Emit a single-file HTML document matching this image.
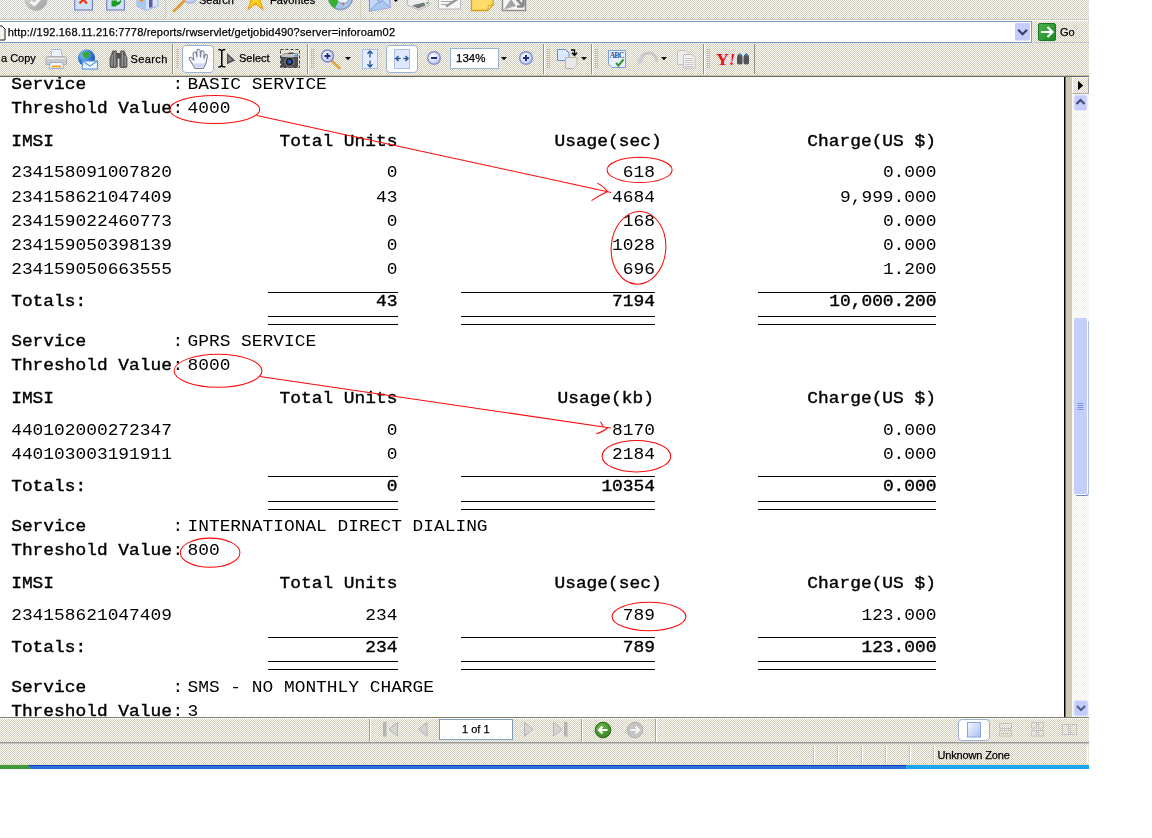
<!DOCTYPE html>
<html>
<head>
<meta charset="utf-8">
<title>Report</title>
<style>
html,body{margin:0;padding:0;background:#fff;}
body{width:1152px;height:838px;position:relative;overflow:hidden;font-family:"Liberation Sans",sans-serif;font-size:11px;color:#000;}
#win{position:absolute;left:0;top:0;width:1089px;height:769px;overflow:hidden;background:#fff;}
.abs{position:absolute;}
.dith1{background:repeating-conic-gradient(rgba(0,0,0,0) 0 25%,#cccccc 0 50%) 0 0/2px 2px,linear-gradient(90deg,#fdfff8 0,#fffdf0 25%,#fffbe6 50%,#fffbe6 100%);}
.dith2{background:repeating-conic-gradient(#fffbe4 0 25%,#cccccc 0 50%) 0 0/2px 2px;}
/* top IE toolbar */
#tb1{left:0;top:0;width:1090px;height:19px;}
#tb1line{left:0;top:19px;width:1090px;height:1px;background:#ccccb0;}
#tb1w{left:0;top:20px;width:1090px;height:1px;background:#fff;}
/* address bar */
#addr{left:0;top:21px;width:1090px;height:22px;}
#addrf{left:-1px;top:21px;width:1031px;height:20px;background:#fff;border:1px solid #7f9db9;}
#url{left:7.7px;top:25px;font-size:11px;line-height:14px;white-space:nowrap;letter-spacing:0.195px;}
/* acrobat toolbar */
#tb2{left:0;top:43px;width:1090px;height:32px;}
#tb2a{left:0;top:75px;width:1090px;height:1px;background:#cdc2aa;}
#tb2b{left:0;top:76px;width:1090px;height:1px;background:#686868;}
#txt{position:absolute;left:0;top:0;width:1064px;height:640px;filter:grayscale(1);}
#url{filter:grayscale(1);-webkit-text-stroke:0.25px #000;}
.lbl{filter:grayscale(1);-webkit-text-stroke:0.25px #000;position:absolute;font-size:11px;line-height:14px;white-space:nowrap;}
/* document */
#doc{left:0;top:77px;width:1064px;height:640px;background:#fff;overflow:hidden;}
.t{position:absolute;font-family:"Liberation Mono",monospace;font-size:17.87px;line-height:20px;height:20px;white-space:pre;transform-origin:0 0;transform:scaleY(0.875);color:#000;}
.b{-webkit-text-stroke:0.42px #000;}
.r{text-align:right;}
.ln{position:absolute;height:1px;background:#000;}
/* bottom */
#nav{left:0;top:717px;width:1090px;height:26px;}
#st{left:0;top:744px;width:1090px;height:21px;}
</style>
</head>
<body>
<div id="win">
<div id="tb1" class="abs dith1"></div>
<div id="tb1line" class="abs"></div>
<div id="tb1w" class="abs"></div>
<div id="addr" class="abs dith2"></div>
<div id="addrf" class="abs"></div>
<div id="url" class="abs">http://192.168.11.216:7778/reports/rwservlet/getjobid490?server=inforoam02</div>
<div id="tb2" class="abs dith2"></div>
<div id="tb2a" class="abs"></div>
<div id="tb2b" class="abs"></div>
<div id="doc" class="abs">
<div id="txt">
<div class="t b" style="left:11.20px;top:-0.71px">Service</div>
<div class="t" style="left:172.40px;top:-0.71px">:</div>
<div class="t" style="left:187.50px;top:-0.71px">BASIC SERVICE</div>
<div class="t b" style="left:11.20px;top:23.29px">Threshold Value</div>
<div class="t" style="left:172.40px;top:23.29px">:</div>
<div class="t" style="left:187.50px;top:23.29px">4000</div>
<div class="t b" style="left:11.20px;top:56.09px">IMSI</div>
<div class="t b" style="left:279.56px;top:56.09px">Total Units</div>
<div class="t b" style="left:554.48px;top:56.09px">Usage(sec)</div>
<div class="t b" style="left:807.34px;top:56.09px">Charge(US $)</div>
<div class="t" style="left:11.20px;top:87.49px">234158091007820</div>
<div class="t" style="left:386.78px;top:87.49px">0</div>
<div class="t" style="left:622.83px;top:87.49px">618</div>
<div class="t" style="left:882.89px;top:87.49px">0.000</div>
<div class="t" style="left:11.20px;top:111.69px">234158621047409</div>
<div class="t" style="left:376.06px;top:111.69px">43</div>
<div class="t" style="left:612.11px;top:111.69px">4684</div>
<div class="t" style="left:840.00px;top:111.69px">9,999.000</div>
<div class="t" style="left:11.20px;top:135.99px">234159022460773</div>
<div class="t" style="left:386.78px;top:135.99px">0</div>
<div class="t" style="left:622.83px;top:135.99px">168</div>
<div class="t" style="left:882.89px;top:135.99px">0.000</div>
<div class="t" style="left:11.20px;top:160.19px">234159050398139</div>
<div class="t" style="left:386.78px;top:160.19px">0</div>
<div class="t" style="left:612.11px;top:160.19px">1028</div>
<div class="t" style="left:882.89px;top:160.19px">0.000</div>
<div class="t" style="left:11.20px;top:184.39px">234159050663555</div>
<div class="t" style="left:386.78px;top:184.39px">0</div>
<div class="t" style="left:622.83px;top:184.39px">696</div>
<div class="t" style="left:882.89px;top:184.39px">1.200</div>
<div class="t b" style="left:11.20px;top:215.89px">Totals:</div>
<div class="t b" style="left:376.06px;top:215.89px">43</div>
<div class="t b" style="left:612.11px;top:215.89px">7194</div>
<div class="t b" style="left:829.28px;top:215.89px">10,000.200</div>
<div class="ln" style="left:268px;top:215px;width:130px"></div>
<div class="ln" style="left:268px;top:239px;width:130px"></div>
<div class="ln" style="left:268px;top:247px;width:130px"></div>
<div class="ln" style="left:461px;top:215px;width:194px"></div>
<div class="ln" style="left:461px;top:239px;width:194px"></div>
<div class="ln" style="left:461px;top:247px;width:194px"></div>
<div class="ln" style="left:758px;top:215px;width:178px"></div>
<div class="ln" style="left:758px;top:239px;width:178px"></div>
<div class="ln" style="left:758px;top:247px;width:178px"></div>
<div class="t b" style="left:11.20px;top:255.89px">Service</div>
<div class="t" style="left:172.40px;top:255.89px">:</div>
<div class="t" style="left:187.50px;top:255.89px">GPRS SERVICE</div>
<div class="t b" style="left:11.20px;top:279.69px">Threshold Value</div>
<div class="t" style="left:172.40px;top:279.69px">:</div>
<div class="t" style="left:187.50px;top:279.69px">8000</div>
<div class="t b" style="left:11.20px;top:312.69px">IMSI</div>
<div class="t b" style="left:279.56px;top:312.69px">Total Units</div>
<div class="t b" style="left:557.50px;top:312.69px">Usage(kb)</div>
<div class="t b" style="left:807.34px;top:312.69px">Charge(US $)</div>
<div class="t" style="left:11.20px;top:344.89px">440102000272347</div>
<div class="t" style="left:386.78px;top:344.89px">0</div>
<div class="t" style="left:612.11px;top:344.89px">8170</div>
<div class="t" style="left:882.89px;top:344.89px">0.000</div>
<div class="t" style="left:11.20px;top:369.09px">440103003191911</div>
<div class="t" style="left:386.78px;top:369.09px">0</div>
<div class="t" style="left:612.11px;top:369.09px">2184</div>
<div class="t" style="left:882.89px;top:369.09px">0.000</div>
<div class="t b" style="left:11.20px;top:400.89px">Totals:</div>
<div class="t b" style="left:386.78px;top:400.89px">0</div>
<div class="t b" style="left:601.39px;top:400.89px">10354</div>
<div class="t b" style="left:882.89px;top:400.89px">0.000</div>
<div class="ln" style="left:268px;top:399px;width:130px"></div>
<div class="ln" style="left:268px;top:424px;width:130px"></div>
<div class="ln" style="left:268px;top:432px;width:130px"></div>
<div class="ln" style="left:461px;top:399px;width:194px"></div>
<div class="ln" style="left:461px;top:424px;width:194px"></div>
<div class="ln" style="left:461px;top:432px;width:194px"></div>
<div class="ln" style="left:758px;top:399px;width:178px"></div>
<div class="ln" style="left:758px;top:424px;width:178px"></div>
<div class="ln" style="left:758px;top:432px;width:178px"></div>
<div class="t b" style="left:11.20px;top:440.79px">Service</div>
<div class="t" style="left:172.40px;top:440.79px">:</div>
<div class="t" style="left:187.50px;top:440.79px">INTERNATIONAL DIRECT DIALING</div>
<div class="t b" style="left:11.20px;top:464.69px">Threshold Value</div>
<div class="t" style="left:172.40px;top:464.69px">:</div>
<div class="t" style="left:187.50px;top:464.69px">800</div>
<div class="t b" style="left:11.20px;top:497.79px">IMSI</div>
<div class="t b" style="left:279.56px;top:497.79px">Total Units</div>
<div class="t b" style="left:554.48px;top:497.79px">Usage(sec)</div>
<div class="t b" style="left:807.34px;top:497.79px">Charge(US $)</div>
<div class="t" style="left:11.20px;top:529.99px">234158621047409</div>
<div class="t" style="left:365.33px;top:529.99px">234</div>
<div class="t" style="left:622.83px;top:529.99px">789</div>
<div class="t" style="left:861.45px;top:529.99px">123.000</div>
<div class="t b" style="left:11.20px;top:561.89px">Totals:</div>
<div class="t b" style="left:365.33px;top:561.89px">234</div>
<div class="t b" style="left:622.83px;top:561.89px">789</div>
<div class="t b" style="left:861.45px;top:561.89px">123.000</div>
<div class="ln" style="left:268px;top:560px;width:130px"></div>
<div class="ln" style="left:268px;top:584px;width:130px"></div>
<div class="ln" style="left:268px;top:592px;width:130px"></div>
<div class="ln" style="left:461px;top:560px;width:194px"></div>
<div class="ln" style="left:461px;top:584px;width:194px"></div>
<div class="ln" style="left:461px;top:592px;width:194px"></div>
<div class="ln" style="left:758px;top:560px;width:178px"></div>
<div class="ln" style="left:758px;top:584px;width:178px"></div>
<div class="ln" style="left:758px;top:592px;width:178px"></div>
<div class="t b" style="left:11.20px;top:601.59px">Service</div>
<div class="t" style="left:172.40px;top:601.59px">:</div>
<div class="t" style="left:187.50px;top:601.59px">SMS - NO MONTHLY CHARGE</div>
<div class="t b" style="left:11.20px;top:625.69px">Threshold Value</div>
<div class="t" style="left:172.40px;top:625.69px">:</div>
<div class="t" style="left:187.50px;top:625.69px">3</div>
</div>
<svg class="abs" style="left:0;top:-77px;" width="1064" height="769" viewBox="0 0 1064 769">
<g fill="none" stroke="#ff0808" stroke-width="1.050">
<ellipse cx="214.7" cy="109.5" rx="45" ry="14"/>
<ellipse cx="639.6" cy="169.9" rx="32.5" ry="12.7"/>
<ellipse cx="638.5" cy="247.8" rx="27.3" ry="36.4" transform="rotate(4 638.5 247.8)"/>
<ellipse cx="218" cy="370.8" rx="43.9" ry="16.5"/>
<ellipse cx="636.4" cy="456.2" rx="34.3" ry="15.7"/>
<ellipse cx="210.1" cy="552.7" rx="29.8" ry="14.6"/>
<ellipse cx="649" cy="616.5" rx="36.9" ry="14.3"/>
<path d="M256.7 115.4 L611.2 192.4"/>
<path d="M597.3 183.1 Q604 186.5 607.5 191.6 Q599 195.5 591.5 200.6"/>
<path d="M259.8 376.5 L610.6 427.9"/>
<path d="M600.4 421.7 L603.4 426.8"/>
<path d="M608 427.8 Q601.5 432.5 596.3 433.8"/>
</g>
</svg>

</div>
<div id="nav" class="abs dith2"></div>
<div id="st" class="abs dith2"></div>
<div class="abs" id="band" style="left:1066px;top:77px;width:6px;height:640px;background:repeating-conic-gradient(#d0cca0 0 25%,#cccccc 0 50%) 0 0/2px 2px;"></div>
<div class="abs" id="pedge" style="left:1064px;top:77px;width:1px;height:640px;background:#000;"></div><div class="abs" style="left:1065px;top:77px;width:1px;height:640px;background:#6e6e6e;"></div>
<div class="abs" id="sbtrack" style="left:1072px;top:77px;width:17px;height:640px;background:repeating-conic-gradient(#ffffff 0 25%,#f1f1ea 0 50%) 0 0/2px 2px;"></div>
<div class="abs" id="sbarrow" style="left:1072px;top:77px;width:16px;height:16px;border-left:1px solid #fff;border-top:1px solid #fff;border-right:1px solid #a8a8a0;border-bottom:1px solid #b4aca4;box-sizing:border-box;width:17px;height:17px;background:repeating-conic-gradient(#fffbe4 0 25%,#d4d4d4 0 50%) 0 0/2px 2px;"></div>
<div class="abs" id="sbthumb" style="left:1074px;top:318px;width:13px;height:176px;border-radius:2px;box-shadow:1px 1px 0 0 #fff, 1.500px 2px 0 0 #6c84d0;background:repeating-conic-gradient(#cfd4ff 0 25%,#bcc8f8 0 50%) 0 0/2px 2px;"></div>
<div class="lbl" style="left:1px;top:51px;">a Copy</div>
<div class="lbl" style="left:130.5px;top:52px;letter-spacing:0.4px;">Search</div>
<div class="lbl" style="left:239px;top:51px;">Select</div>
<div class="lbl" style="left:199px;top:-7.5px;">Search</div>
<div class="lbl" style="left:270px;top:-7.5px;">Favorites</div>
<div class="lbl" style="left:1060px;top:25px;">Go</div>
<div class="abs" style="left:450px;top:48px;width:47px;height:19px;border:1px solid #9db4cf;background:#fff;"></div>
<div class="lbl" style="left:456px;top:51px;font-size:11.5px;">134%</div>
<div class="abs" style="left:439px;top:719px;width:72px;height:19px;border:1px solid #7f9db9;background:#fff;"></div>
<div class="lbl" style="left:462px;top:722px;">1 of 1</div>
<div class="lbl" style="left:937.5px;top:748px;letter-spacing:-0.15px;">Unknown Zone</div>
<svg class="abs" id="ico" style="left:0;top:0;" width="1090" height="769" viewBox="0 0 1090 769">
<defs>
<linearGradient id="gGray" x1="0" y1="0" x2="1" y2="1"><stop offset="0" stop-color="#e4e4e4"/><stop offset="1" stop-color="#9a9a9a"/></linearGradient>
<linearGradient id="gBlue" x1="0" y1="0" x2="0" y2="1"><stop offset="0" stop-color="#e8f0ff"/><stop offset="1" stop-color="#a9c0ee"/></linearGradient>
<linearGradient id="gPage" x1="0" y1="0" x2="1" y2="1"><stop offset="0" stop-color="#f4f8ff"/><stop offset="1" stop-color="#a8bdf0"/></linearGradient>
<radialGradient id="gGlobe" cx="0.35" cy="0.3" r="0.8"><stop offset="0" stop-color="#8fd0ff"/><stop offset="0.6" stop-color="#2a6fd0"/><stop offset="1" stop-color="#1a3f9a"/></radialGradient>
<radialGradient id="gLens" cx="0.4" cy="0.35" r="0.7"><stop offset="0" stop-color="#ffffff"/><stop offset="1" stop-color="#b8c4f4"/></radialGradient>
<linearGradient id="gGo" x1="0" y1="0" x2="1" y2="1"><stop offset="0" stop-color="#4cb050"/><stop offset="1" stop-color="#1a8a22"/></linearGradient>
<radialGradient id="gGreen" cx="0.4" cy="0.35" r="0.7"><stop offset="0" stop-color="#6fc04a"/><stop offset="1" stop-color="#2e7d1e"/></radialGradient>
</defs>
<!-- ===== top IE toolbar (clipped at top) ===== -->
<g id="ie-tb">
<circle cx="36.200" cy="-0.500" r="11" fill="url(#gGray)" stroke="#b8b8b8" stroke-width="1"/>
<path d="M30.500 1.500 L34.500 4.500 L40.500 -2" fill="none" stroke="#f4f4f4" stroke-width="3"/>
<rect x="74.800" y="-8" width="17.600" height="18" fill="#cfe0fb" stroke="#6a74b8" stroke-width="1"/>
<path d="M79.500 3.500 L83.200 -0.300 L87 3.500" fill="none" stroke="#f43a10" stroke-width="2.400"/>
<rect x="106.800" y="-8" width="17.600" height="18" fill="#cfe0fb" stroke="#6a74b8" stroke-width="1"/>
<path d="M111.500 0.500 L117 0.500 L117 2 C119 2 120.500 1 121.500 -1 C121.500 3 119 5.500 116 5.500 L116 6.500 L111.500 6.500 Z" fill="#1a9a22"/>
<path d="M137 -3 L137 6.500 L146 10.500 L158 6 L158 -3 Z" fill="#d4e4fa" stroke="#9ab8e4" stroke-width="1"/>
<path d="M137 6.500 L146 10.500 L146 0 L137 -2 Z" fill="#a8c8f0"/>
<rect x="149" y="0" width="3.500" height="7.500" fill="#5c5ca8"/>
<circle cx="141.500" cy="-0.500" r="2" fill="#f08a20"/>
<rect x="165" y="0" width="1" height="18" fill="#d8d4b0"/>
<circle cx="190" cy="-5" r="8" fill="url(#gLens)" stroke="#a8b8d8" stroke-width="1.500"/>
<path d="M174 11 L184 1" stroke="#e89a30" stroke-width="2.600" stroke-linecap="round"/>
<path d="M255.500 -13.500 L258.300 -4.800 L267.400 -4.900 L260 0.500 L262.900 9.200 L255.500 3.800 L248.100 9.200 L251 0.500 L243.600 -4.900 L252.700 -4.800 Z" fill="#ffd022" stroke="#e8a010" stroke-width="1.200"/>
<circle cx="340.500" cy="-2.500" r="12" fill="#a4c8ec" stroke="#8a98b8" stroke-width="1.500"/>
<path d="M340.500 -14.500 A12 12 0 0 0 335 8.200 L340.500 -2.500 Z" fill="#38b030"/>
<circle cx="343" cy="-3" r="6.500" fill="#e8f0f8" stroke="#8890b0" stroke-width="1"/>
<path d="M343 2.500 L343 5.500" stroke="#e04020" stroke-width="1"/>
<rect x="360" y="0" width="1" height="18" fill="#d8d4b0"/>
<path d="M369.500 -8 L369.500 11 L390 7.500 L390 -8 Z" fill="#c4d8f8" stroke="#8a98d8" stroke-width="1.200"/>
<path d="M369.500 11 L381 -1 L390 7.500" fill="#a8c8f0" stroke="#8a98d8" stroke-width="1"/><path d="M371 -6 L380 3 L389 -6" fill="none" stroke="#8a98d8" stroke-width="1"/>
<path d="M393.800 0 L397.800 0 L395.800 2 Z" fill="#000"/>
<path d="M408 -2 L428 -2 L429 5 L419 10 L407 5 Z" fill="#ececec" stroke="#b8b8b8" stroke-width="1"/>
<path d="M412 5.500 L424 2.500 L425.500 5.500 L418 8.500 Z" fill="#787878"/>
<circle cx="427" cy="3" r="1" fill="#30c030"/>
<rect x="438.500" y="-6" width="22" height="15" fill="#f6f6f6" stroke="#b8b8b8" stroke-width="1"/>
<path d="M441 1.500 L452 1.500 M441 4.500 L448 4.500" stroke="#a8a8a8" stroke-width="1"/>
<path d="M446 6.500 L459 -2" stroke="#9a9a9a" stroke-width="2.500"/>
<path d="M471.500 -8 L493 -8 L493 5 L487.500 10.500 L471.500 10.500 Z" fill="#ffdc6a" stroke="#d8a018" stroke-width="1.300"/>
<path d="M487.500 10.500 L488.500 5.500 L493 5 Z" fill="#fff0b0" stroke="#d8a018" stroke-width="1"/>
<rect x="502.500" y="-8" width="23" height="18.500" fill="#f4f4f4" stroke="#8c8c8c" stroke-width="1.400"/>
<path d="M504 9.500 L511 -1 L516 6 L504 9.500 Z" fill="#a4a4a4"/>
<path d="M510 -8 L523 6 M523.500 6.500 L523.500 0 M523.500 6.500 L517 6.500" stroke="#8a8a8a" stroke-width="2.600" fill="none"/>
</g>
<!-- ===== address bar ===== -->
<g id="addr-ic">
<rect x="1034" y="42" width="55" height="1" fill="#c8c8c2"/>
<path d="M-3 26 L2 26 L5 29 L5 40 L-3 40 Z" fill="#f4f4ee" stroke="#202020" stroke-width="1"/>
<rect x="1015" y="23" width="15" height="17.500" rx="1" fill="#c6ccfc"/>
<path d="M1018.200 29.800 L1022.600 34.200 L1027 29.800" fill="none" stroke="#3a3e70" stroke-width="2.200"/>
<rect x="1038.500" y="23.500" width="17" height="17" rx="1.500" fill="url(#gGo)" stroke="#1c7a24" stroke-width="1"/>
<path d="M1041 32 L1052 32 M1047.500 27 L1052.500 32 L1047.500 37" fill="none" stroke="#fff" stroke-width="2.2"/>
</g>
<!-- ===== acrobat toolbar ===== -->
<g id="acro">
<!-- printer -->
<path d="M51 57 L52 49.500 L61 49.500 L62.500 57 Z" fill="#eef2ff" stroke="#a8b8e0" stroke-width="1"/>
<path d="M48 56.500 L64.500 56.500 Q66.500 56.500 66.500 58.500 L66.500 64.500 L46 64.500 L46 58.500 Q46 56.500 48 56.500 Z" fill="#cacaca" stroke="#b0b0b0" stroke-width="1"/>
<path d="M47 58.500 L65.500 58.500" stroke="#f0f0f0" stroke-width="1"/>
<path d="M50.500 62.500 L62.500 62.500 L64 68.500 L49 68.500 Z" fill="#f4f6ff" stroke="#a0aadc" stroke-width="1"/>
<path d="M52 65.500 L61 65.500 L61.500 67.500 L51.500 67.500 Z" fill="#f0a424"/>
<!-- globe + mail -->
<circle cx="86.500" cy="58" r="8.500" fill="url(#gGlobe)"/>
<path d="M82 53 Q86 50 90 53 Q91 57 87 58 Q83 59 82 53 Z" fill="#3aa83a"/>
<rect x="82.500" y="61" width="15" height="8" fill="#f4f8ff" stroke="#5a9ae0" stroke-width="1.2"/>
<path d="M82.500 61 L90 66 L97.500 61" fill="none" stroke="#5a9ae0" stroke-width="1.2"/>
<!-- binoculars -->
<path d="M112.500 50.500 L116.500 50.500 L117.800 56 L117.800 66.500 Q117.800 68 113.700 68 Q109.600 68 109.600 66.500 L109.600 58 Z" fill="#606060"/>
<path d="M120.500 50.500 L124.500 50.500 L127.400 58 L127.400 66.500 Q127.400 68 123.400 68 Q119.300 68 119.300 66.500 L119.300 56 Z" fill="#606060"/>
<rect x="116.500" y="53" width="4.500" height="5.500" fill="#505050"/>
<path d="M112.300 55 L111.800 66 M114.800 52 L114.800 66.500 M122.300 52 L122.300 66.500 M125 56 L125.300 66" stroke="#a4a4a4" stroke-width="1.100"/>
<!-- separators -->
<g fill="#97958a"><rect x="172" y="44" width="1" height="30"/><rect x="307" y="44" width="1" height="30"/><rect x="543" y="44" width="1" height="30"/><rect x="591" y="44" width="1" height="30"/><rect x="703" y="44" width="1" height="30"/><rect x="754" y="44" width="1" height="30"/></g>
<g fill="#ffffff"><rect x="173" y="44" width="1" height="30"/><rect x="308" y="44" width="1" height="30"/><rect x="544" y="44" width="1" height="30"/><rect x="592" y="44" width="1" height="30"/><rect x="704" y="44" width="1" height="30"/></g>
<!-- grippers -->
<g stroke="#c2b8b4" stroke-width="1">
<path d="M176 49.500h3M176 51.500h3M176 53.500h3M176 55.500h3M176 57.500h3M176 59.500h3M176 61.500h3M176 63.500h3M176 65.500h3M176 67.500h3"/>
<path d="M311 49.500h3M311 51.500h3M311 53.500h3M311 55.500h3M311 57.500h3M311 59.500h3M311 61.500h3M311 63.500h3M311 65.500h3M311 67.500h3"/>
<path d="M547 49.500h3M547 51.500h3M547 53.500h3M547 55.500h3M547 57.500h3M547 59.500h3M547 61.500h3M547 63.500h3M547 65.500h3M547 67.500h3"/>
<path d="M595 49.500h3M595 51.500h3M595 53.500h3M595 55.500h3M595 57.500h3M595 59.500h3M595 61.500h3M595 63.500h3M595 65.500h3M595 67.500h3"/>
<path d="M707 49.500h3M707 51.500h3M707 53.500h3M707 55.500h3M707 57.500h3M707 59.500h3M707 61.500h3M707 63.500h3M707 65.500h3M707 67.500h3"/>
</g>
<!-- hand button -->
<rect x="182.500" y="45.500" width="31" height="27" rx="3.500" fill="#fff" stroke="#9ab4d0" stroke-width="1"/>
<path d="M195 68.500 L192.500 64 L189.500 59.500 Q188.800 57.500 190.500 57.300 Q192 57.500 193.800 60.500 L193 53.500 Q193.300 51.800 194.800 52 Q196 52.200 196.300 54 L197 57.500 L196.800 50.800 Q197.200 49.200 198.600 49.200 Q200 49.300 200.200 51 L200.500 57.500 L201 52 Q201.500 50.500 202.800 50.700 Q204 51 204 52.500 L203.800 58.500 L205 55.500 Q205.800 54 206.800 54.500 Q207.600 55 207.300 56.800 L206 63 Q205 66.500 203.200 68.500 Z" fill="#f4f6ff" stroke="#7c8090" stroke-width="1.100"/><path d="M195.500 67.500 L193.500 63.500 L205 63.500 L203 67.500 Z" fill="#ccd4f8"/>
<!-- I-beam + arrow -->
<path d="M218.300 49.600 Q221.200 49.600 221.800 51 Q222.400 49.600 225.300 49.600 M221.800 50.500 L221.800 66 M218.300 66.900 Q221.200 66.900 221.800 65.500 Q222.400 66.900 225.300 66.900" stroke="#000" stroke-width="1.500" fill="none"/>
<path d="M227 53 L235.200 60.500 L227 64.200 Z" fill="#505050"/><path d="M228.500 56 L232 60 L228.500 61.500 Z" fill="#8a8a8a"/>
<!-- camera -->
<rect x="280.500" y="49.500" width="19" height="18" fill="none" stroke="#404040" stroke-width="1" stroke-dasharray="3 2"/>
<path d="M281 56 L284 53.500 L288 53.500 L289 52.500 L293 52.500 L294 53.500 L298 53.500 L298 67.500 L281 67.500 Z" fill="#4c4c4c"/>
<path d="M281.500 56 L284 54 L297.500 54 L297.500 57 L281.500 57 Z" fill="#c4c8cc"/>
<circle cx="289.500" cy="61.800" r="4.500" fill="#1c2230" stroke="#8c8c8c" stroke-width="1"/>
<circle cx="289.500" cy="61.800" r="2" fill="#2c58b0"/>
<rect x="294.500" y="55" width="2.500" height="1.500" fill="#3090e0"/>
<!-- zoom in magnifier -->
<path d="M332 61 L339.500 68" stroke="#e0a838" stroke-width="2.600" stroke-linecap="round"/>
<circle cx="327.500" cy="56" r="6" fill="url(#gLens)" stroke="#8088c8" stroke-width="1.500"/>
<path d="M324.500 56 L330.500 56 M327.500 53 L327.500 59" stroke="#203080" stroke-width="1.800"/>
<path d="M345 57 L351 57 L348 60.200 Z" fill="#000"/>
<!-- fit height -->
<rect x="362.500" y="49.500" width="15" height="19" fill="#e4ecff" stroke="#a8c0ec" stroke-width="1"/>
<path d="M370 51 L370 57.500 M367.500 53.800 L370 51 L372.500 53.800 M370 60.500 L370 67 M367.500 64.200 L370 67 L372.500 64.200" stroke="#285890" stroke-width="1.300" fill="none"/>
<!-- fit width (selected) -->
<rect x="386.500" y="45.500" width="31" height="27" rx="3.500" fill="#fff" stroke="#9ab4d0" stroke-width="1"/>
<rect x="394.500" y="49.500" width="15" height="19" fill="#e0e8ff" stroke="#a8c0ec" stroke-width="1"/>
<path d="M396 58.500 L400.500 58.500 M398.500 56 L395.800 58.500 L398.500 61 M403.500 58.500 L408 58.500 M405.500 56 L408.200 58.500 L405.500 61" stroke="#285890" stroke-width="1.300" fill="none"/>
<!-- zoom out / in circles -->
<circle cx="434" cy="58" r="6.300" fill="url(#gLens)" stroke="#8890cc" stroke-width="1.400"/>
<path d="M431 58 L437 58" stroke="#203080" stroke-width="2"/>
<path d="M501 57 L507 57 L504 60.200 Z" fill="#000"/>
<circle cx="526" cy="58" r="6.300" fill="url(#gLens)" stroke="#8890cc" stroke-width="1.400"/>
<path d="M523 58 L529 58 M526 55 L526 61" stroke="#203080" stroke-width="2"/>
<!-- rotate pages -->
<path d="M557.500 49.500 L565.500 49.500 L569 53 L569 60.500 L557.500 60.500 Z" fill="#dce8ff" stroke="#6a90d8" stroke-width="1"/>
<path d="M565.500 57.500 L577 57.500 L577 65 L573.500 68.500 L565.500 68.500 Z" fill="#e8e8e8" stroke="#b4b4b4" stroke-width="1"/>
<path d="M571 50 L574.500 50 L574.500 55 M572 52.800 L574.500 55.500 L577 52.800" fill="none" stroke="#000" stroke-width="1.400"/>
<path d="M581 57 L587 57 L584 60.200 Z" fill="#000"/>
<!-- ABC check -->
<path d="M608.500 50.500 L625.500 50.500 L625.500 67.500 L612 67.500 L608.500 64 Z" fill="#e8f0ff" stroke="#7aa0e0" stroke-width="1"/>
<path d="M616 63 L618.500 65.500 L623.500 59.500" fill="none" stroke="#3a9030" stroke-width="2"/>
<!-- undo (disabled) -->
<path d="M640 62 Q642 52 650 53 Q656 54 657 62" fill="none" stroke="#c8c8c8" stroke-width="3"/>
<path d="M637 57 L644 60 L638.500 65 Z" fill="#d0d0d0"/>
<path d="M661 57 L667 57 L664 60.200 Z" fill="#000"/>
<!-- copy pages (disabled) -->
<path d="M677.500 50.500 L686 50.500 L689 53.500 L689 64.500 L677.500 64.500 Z" fill="#ececec" stroke="#c4c4c4" stroke-width="1"/>
<path d="M683.500 54.500 L692 54.500 L695 57.500 L695 68 L683.500 68 Z" fill="#f0f0f0" stroke="#c0c0c0" stroke-width="1"/>
<path d="M685 58.500h8M685 60.500h8M685 62.500h8M685 64.500h8M685 66.500h8" stroke="#c8c8c8" stroke-width="1"/>
<!-- yahoo binoculars -->
<path d="M737 58 Q737 54 740 54 Q742.500 54 742.500 58 L742.500 63 Q742.500 64.500 739.700 64.500 Q737 64.500 737 63 Z" fill="#50545a"/>
<path d="M743.500 58 Q743.500 54 746.300 54 Q749 54 749 58 L749 63 Q749 64.500 746.300 64.500 Q743.500 64.500 743.500 63 Z" fill="#50545a"/>
<circle cx="740" cy="54.500" r="1.200" fill="#3a80d8"/><circle cx="746.300" cy="54.500" r="1.200" fill="#3a80d8"/>
</g>
<text x="609.500" y="58" font-family="Liberation Serif, serif" font-size="8" font-weight="bold" fill="#3a5a98" textLength="15">ABC</text>
<text x="716" y="64.500" font-family="Liberation Serif, serif" font-size="16" font-weight="bold" fill="#e8101a" textLength="13" lengthAdjust="spacingAndGlyphs">Y</text>
<text x="729" y="64.500" font-family="Liberation Serif, serif" font-size="16" font-weight="bold" font-style="italic" fill="#e8101a">!</text>
<!-- ===== scrollbar ===== -->
<g id="sb">
<path d="M1078 80.800 L1083.200 85.500 L1078 90.200 Z" fill="#000"/>
<rect x="1074" y="95" width="13" height="15.500" rx="2" fill="#c6ccfc" stroke="#e2e6ff" stroke-width="1"/>
<path d="M1076.500 104 L1080.500 100 L1084.500 104" fill="none" stroke="#3e4e78" stroke-width="2.200"/>
<rect x="1074" y="700.500" width="14" height="15.500" rx="2" fill="#c3ccfa" stroke="#dfe4ff" stroke-width="1"/>
<path d="M1077 706 L1081 710 L1085 706" fill="none" stroke="#4d6185" stroke-width="2.2"/>
<path d="M1077.500 403.500h6M1077.500 405.500h6M1077.500 407.500h6M1077.500 409.500h6" stroke="#7e94e4" stroke-width="1"/>
</g>
<!-- ===== bottom nav ===== -->
<g id="nav-ic">
<rect x="0" y="717" width="1090" height="1" fill="#807e70"/>
<rect x="0" y="718" width="1090" height="1" fill="#fbfbe8"/>
<rect x="0" y="742" width="1090" height="1" fill="#9a9a96"/>
<rect x="0" y="743" width="1090" height="1" fill="#c4c2b8"/>
<rect x="369" y="719" width="1" height="23" fill="#a8a69a"/><rect x="370" y="719" width="1" height="23" fill="#fff"/>
<rect x="581" y="719" width="1" height="23" fill="#a8a69a"/><rect x="582" y="719" width="1" height="23" fill="#fff"/>
<rect x="655" y="719" width="1" height="23" fill="#a8a69a"/><rect x="656" y="719" width="1" height="23" fill="#fff"/>
<rect x="383" y="722" width="3.500" height="14.500" fill="#b4b4b4"/>
<path d="M397.500 722.500 L389 729.300 L397.500 736.200 Z" fill="#d4d4d0" stroke="#b4b4b4" stroke-width="1"/>
<path d="M427 722.500 L418.500 729.300 L427 736.200 Z" fill="#d4d4d0" stroke="#b4b4b4" stroke-width="1"/>
<path d="M524.500 722.500 L533 729.300 L524.500 736.200 Z" fill="#d4d4d0" stroke="#b4b4b4" stroke-width="1"/>
<path d="M553.500 722.500 L562 729.300 L553.500 736.200 Z" fill="#d4d4d0" stroke="#b4b4b4" stroke-width="1"/>
<rect x="564" y="722" width="3.500" height="14.500" fill="#b4b4b4"/>
<circle cx="603" cy="730" r="7.800" fill="url(#gGreen)" stroke="#2a6a1a" stroke-width="1"/>
<path d="M599 730 L607.500 730 M602.500 726.500 L599 730 L602.500 733.500" fill="none" stroke="#fff" stroke-width="2.200"/>
<circle cx="635" cy="730" r="7.800" fill="#c4c4c4" stroke="#b0b0b0" stroke-width="1"/>
<path d="M630.500 730 L639 730 M635.500 726.500 L639 730 L635.500 733.500" fill="none" stroke="#f4f4f4" stroke-width="2.200"/>
<!-- page layout buttons -->
<rect x="958.500" y="719.500" width="31" height="21" rx="3.500" fill="#fff" stroke="#9ab4d0" stroke-width="1"/>
<rect x="967.500" y="722.500" width="13" height="14.500" fill="url(#gPage)" stroke="#88a4dc" stroke-width="1"/>
<g stroke="#c4c4c0" stroke-width="1" fill="none">
<rect x="999.500" y="723.500" width="12" height="5"/><rect x="999.500" y="730.500" width="12" height="5.500"/><path d="M1000 733.500h11"/>
<rect x="1031.500" y="722.500" width="5" height="5.500"/><rect x="1038.500" y="722.500" width="5" height="5.500"/><rect x="1031.500" y="730.500" width="5" height="5.500"/><rect x="1038.500" y="730.500" width="5" height="5.500"/>
<rect x="1062.500" y="724.500" width="6" height="10"/><rect x="1070.500" y="724.500" width="6" height="10"/>
</g>
</g>
<!-- ===== status bar ===== -->
<g id="st-ic" fill="#fff">
<rect x="814" y="746" width="1" height="17"/><rect x="838" y="746" width="1" height="17"/><rect x="862" y="746" width="1" height="17"/><rect x="886" y="746" width="1" height="17"/><rect x="910" y="746" width="1" height="17"/><rect x="934" y="746" width="1" height="17"/><rect x="1087" y="746" width="1" height="17"/>
</g>
<g fill="#c8c4b0"><rect x="813" y="746" width="1" height="17"/><rect x="837" y="746" width="1" height="17"/><rect x="861" y="746" width="1" height="17"/><rect x="885" y="746" width="1" height="17"/><rect x="909" y="746" width="1" height="17"/><rect x="933" y="746" width="1" height="17"/></g>
<!-- ===== taskbar strip ===== -->
<rect x="0" y="764" width="1090" height="1" fill="#e0dcc0"/>
<rect x="0" y="765" width="906" height="4" fill="#2a6edc"/>
<rect x="906" y="765" width="184" height="4" fill="#1ea4ec"/>
<rect x="0" y="765" width="906" height="1" fill="#1440c8"/>
<path d="M0 765 L28 765 L31 769 L0 769 Z" fill="#3c9a3c"/>

</svg>

</div>
</body>
</html>
